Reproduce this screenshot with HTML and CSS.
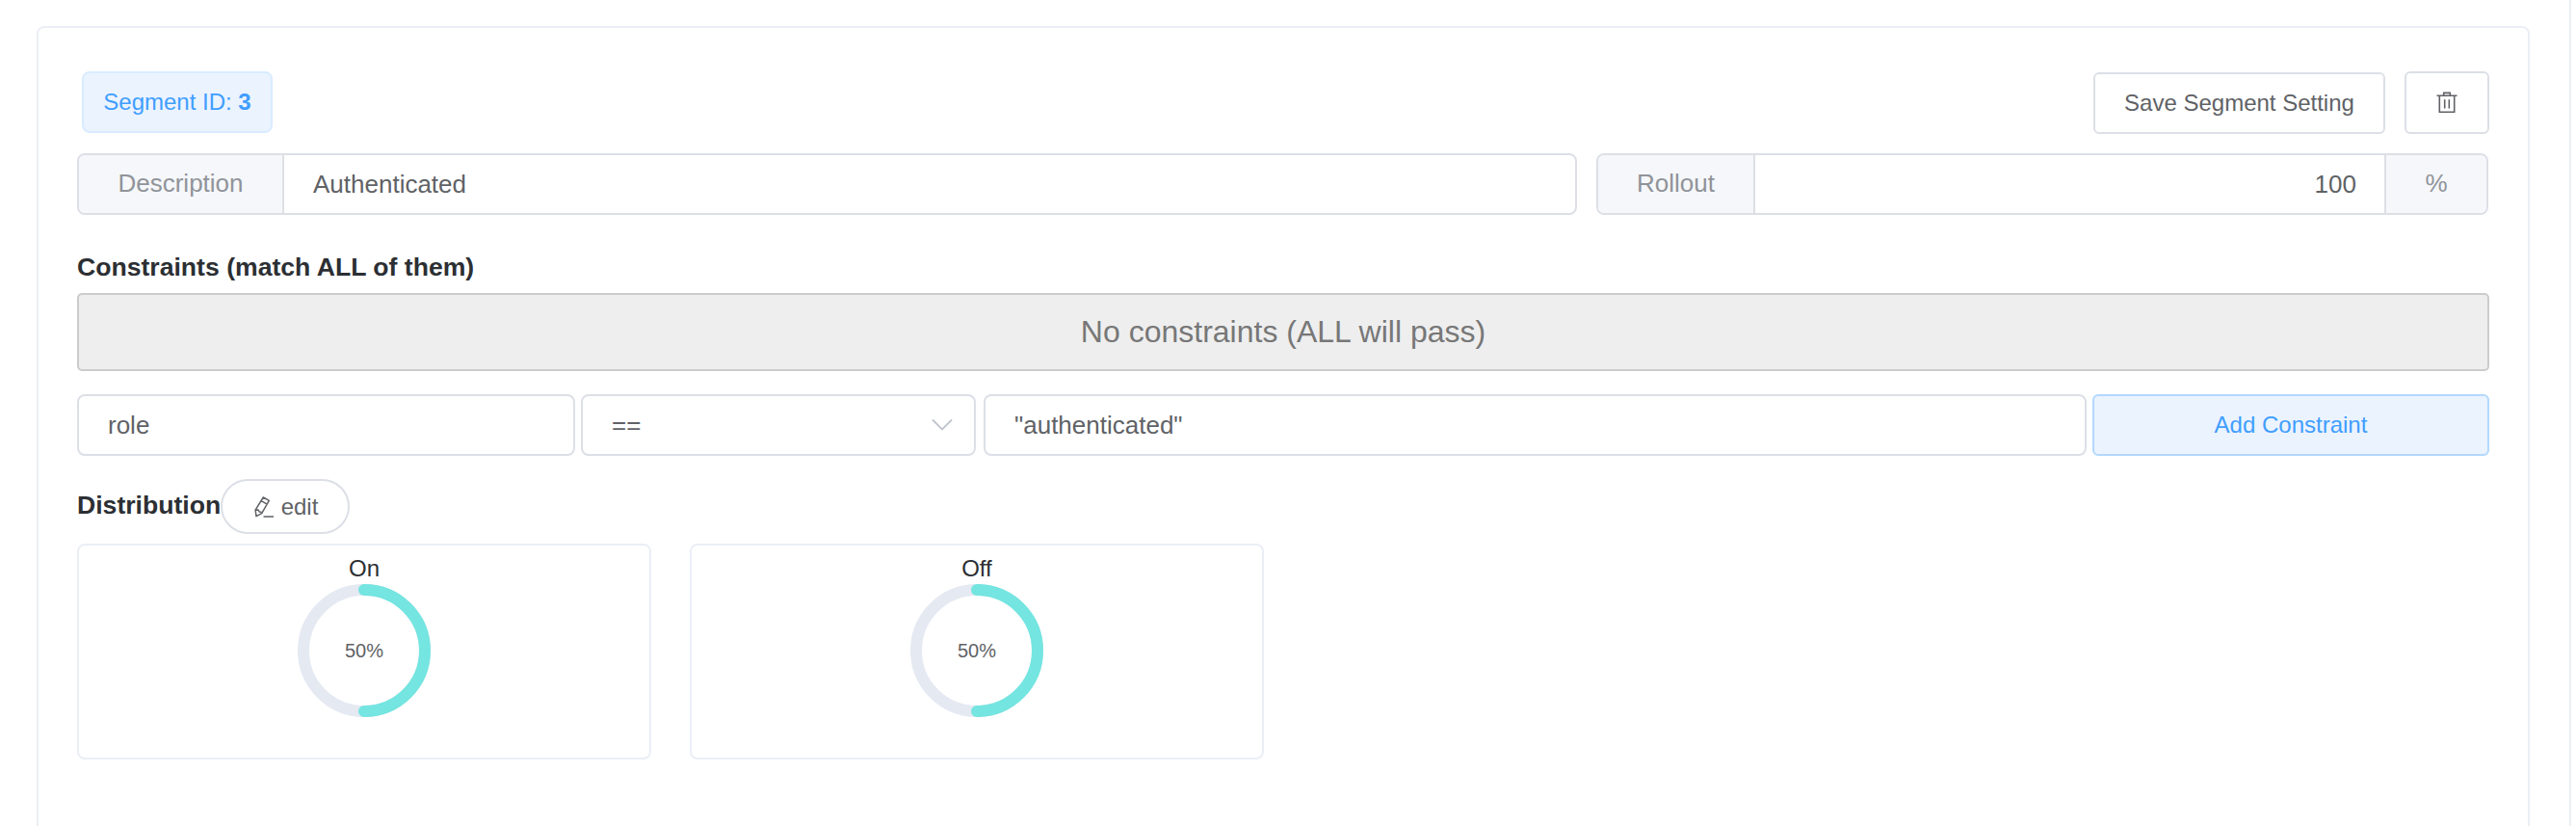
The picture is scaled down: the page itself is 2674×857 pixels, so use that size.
FILE: index.html
```html
<!DOCTYPE html>
<html lang="en">
<head>
<meta charset="utf-8">
<title>Segment</title>
<link rel="stylesheet" href="styles.css">
</head>
<body>
<main class="panel">
  <section class="segment">
    <header class="toolbar">
      <span class="tag"><span>Segment ID: <b>3</b></span></span>
      <div class="actions">
        <button class="btn save">Save Segment Setting</button>
        <button class="btn remove" aria-label="Delete">
          <svg width="22" height="24" viewBox="0 0 22 24" fill="none" stroke="currentColor" stroke-width="1.6"><path d="M.5 4.3h21M7.7 4.3V1.4h6.6v2.9M3.3 4.5v16.7h15.4V4.5M8.7 8.2v9.3M13.3 8.2v9.3"/></svg>
        </button>
      </div>
    </header>
    <div class="settings">
      <div class="group description"><label class="addon">Description</label><div class="value">Authenticated</div></div>
      <div class="group rollout"><label class="addon">Rollout</label><div class="value number">100</div><span class="addon unit">%</span></div>
    </div>
    <h5 class="heading">Constraints (match ALL of them)</h5>
    <div class="empty">No constraints (ALL will pass)</div>
    <div class="constraint">
      <div class="field">role</div>
      <div class="field select"><span>==</span>
        <svg width="22" height="14" viewBox="0 0 22 14" fill="none" stroke="#c0c4cc" stroke-width="1.8"><path d="M1 1.5l10 10 10-10"/></svg>
      </div>
      <div class="field">"authenticated"</div>
      <button class="btn primary">Add Constraint</button>
    </div>
    <div class="distribution-head">
      <h5 class="heading">Distribution</h5>
      <button class="btn edit">
        <svg width="20" height="22" viewBox="0 0 20 22" fill="none" stroke="currentColor" stroke-width="1.5" stroke-linejoin="round"><path d="M9.3 1l6 3.3-7.6 13.3-5.7 3-.9-6.4zM7.2 4.7l6 3.4M1.2 14.2l2.9-.2 1 2 2.4.2M9.5 20.9H20"/></svg>
        <span>edit</span>
      </button>
    </div>
    <div class="variants">
      <div class="variant">
        <div class="name">On</div>
        <div class="ring"><svg width="138" height="138" viewBox="0 0 138 138" fill="none" stroke-width="12"><circle cx="69" cy="69" r="63" stroke="#e5e9f2"/><path d="M69 6a63 63 0 0 1 0 126" stroke="#74e5e0" stroke-linecap="round"/></svg><span>50%</span></div>
      </div>
      <div class="variant">
        <div class="name">Off</div>
        <div class="ring"><svg width="138" height="138" viewBox="0 0 138 138" fill="none" stroke-width="12"><circle cx="69" cy="69" r="63" stroke="#e5e9f2"/><path d="M69 6a63 63 0 0 1 0 126" stroke="#74e5e0" stroke-linecap="round"/></svg><span>50%</span></div>
      </div>
    </div>
  </section>
</main>
</body>
</html>
```
FILE: styles.css
```css
* { box-sizing: border-box; }
body {
  margin: 0;
  background: #fff;
  color: #2c2f33;
  font-family: Arial, "Liberation Sans", sans-serif;
  font-size: 24px;
}
.panel {
  width: 2669px;
  height: 857px;
  padding: 27px 41px 0 38px;
  border-right: 2px solid #ebeef5;
  overflow: hidden;
}
.segment {
  height: 900px;
  padding: 45px 40px 0;
  border: 2px solid #ebeef5;
  border-radius: 8px;
}
.toolbar {
  display: flex;
  justify-content: space-between;
  padding-left: 5px;
  height: 65px;
}
.tag {
  display: flex;
  align-items: center;
  justify-content: center;
  width: 198px;
  height: 64px;
  border: 2px solid #d9ecff;
  border-radius: 8px;
  background: #ebf3ff;
  color: #409eff;
  font-size: 24px;
}
.actions { display: flex; align-items: flex-end; gap: 20px; }
.btn {
  display: flex;
  align-items: center;
  justify-content: center;
  height: 64px;
  padding: 0;
  border: 2px solid #dcdfe6;
  border-radius: 6px;
  background: #fff;
  color: #606266;
  font: inherit;
}
.save { width: 303px; }
.remove { width: 88px; height: 65px; }
.settings {
  display: grid;
  grid-template-columns: 1557px 926px;
  gap: 20px;
  margin-top: 20px;
}
.group {
  display: flex;
  height: 64px;
  border: 2px solid #dcdfe6;
  border-radius: 8px;
  overflow: hidden;
  font-size: 26px;
}
.addon {
  display: flex;
  align-items: center;
  justify-content: center;
  width: 213px;
  padding-bottom: 2px;
  border-right: 2px solid #dcdfe6;
  background: #f5f7fa;
  color: #909399;
}
.rollout .addon { width: 163px; }
.rollout .unit { width: 106px; border-right: 0; border-left: 2px solid #dcdfe6; }
.value {
  flex: 1;
  display: flex;
  align-items: center;
  padding: 0 29px 0 30px;
  color: #606266;
}
.number { justify-content: flex-end; }
.heading { margin: 0; font-size: 26.6px; line-height: 30px; }
.settings + .heading { margin-top: 39px; }
.empty {
  display: flex;
  align-items: center;
  justify-content: center;
  height: 81px;
  margin-top: 12px;
  border: 2px solid #ccc;
  border-radius: 5px;
  background: #eee;
  color: #777;
  font-size: 32px;
}
.constraint {
  display: grid;
  grid-template-columns: 517px 410px 1145px 412px;
  column-gap: 6px;
  margin-top: 24px;
}
.field {
  display: flex;
  align-items: center;
  justify-content: space-between;
  height: 64px;
  padding: 0 30px;
  border: 2px solid #dcdfe6;
  border-radius: 8px;
  color: #606266;
  font-size: 26px;
}
.constraint > :nth-child(n+3) { margin-left: 2px; margin-right: -2px; }
.select { padding-right: 22px; }
.primary { border-color: #b3d8ff; background: #ebf3ff; color: #409eff; }
.distribution-head { display: flex; align-items: center; margin-top: 24px; }
.distribution-head .heading { width: 149px; padding-bottom: 3px; }
.edit { width: 134px; height: 57px; gap: 8px; padding-left: 2px; border-radius: 29px; }
.variants { display: grid; grid-template-columns: 596px 596px; gap: 40px; margin-top: 10px; }
.variant {
  display: flex;
  flex-direction: column;
  align-items: center;
  height: 224px;
  padding-top: 9px;
  border: 2px solid #ebeef5;
  border-radius: 8px;
}
.name { height: 31px; line-height: 30px; }
.ring { display: grid; place-items: center; width: 138px; height: 138px; }
.ring > * { grid-area: 1 / 1; }
.ring span { color: #606266; font-size: 20px; }
```
